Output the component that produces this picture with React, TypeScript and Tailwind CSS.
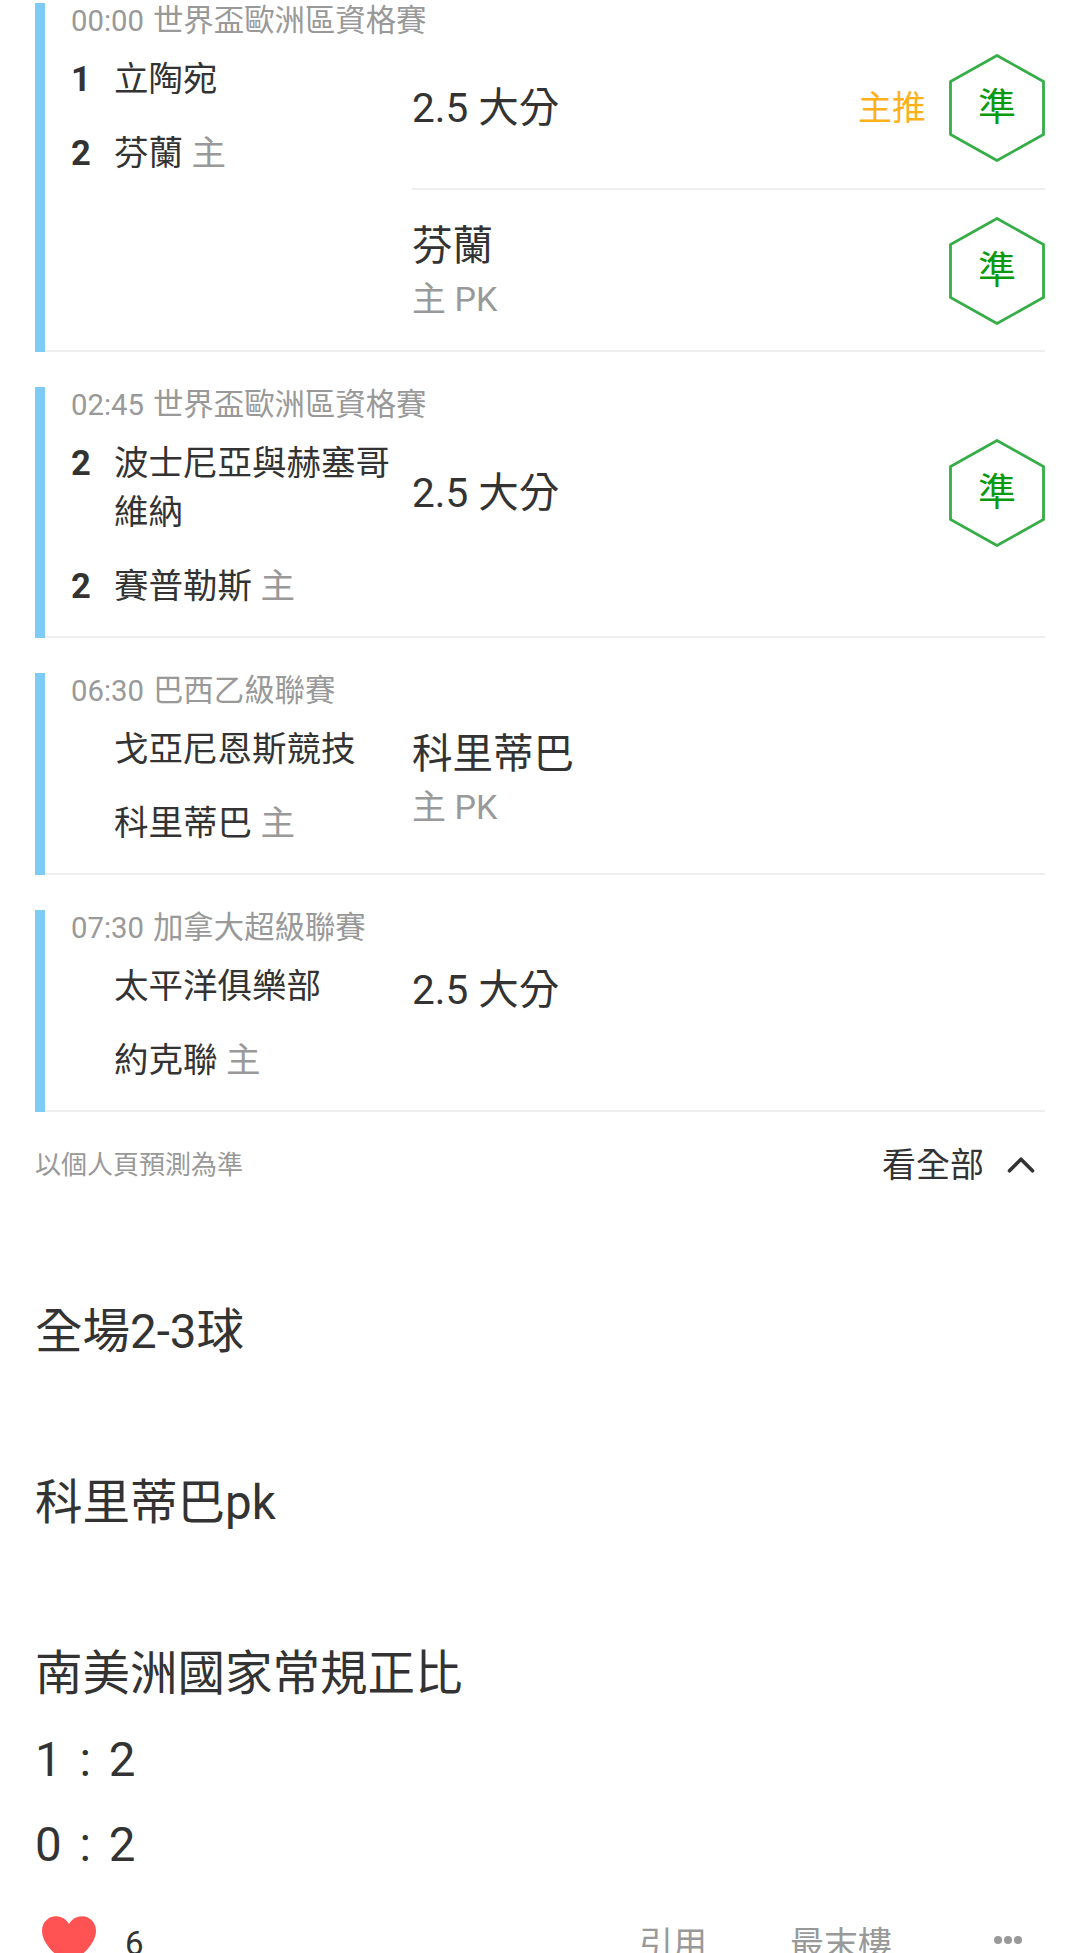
import { ChevronUp } from "lucide-react";

const fontStack = { fontFamily: '"Roboto", "Noto Sans CJK TC", sans-serif' };

type Team = { no?: string; name: string; home?: boolean };
type Pick = { title: string; sub?: string; hot?: boolean; badge?: boolean };
type Match = { time: string; league: string; teams: Team[]; picks: Pick[]; blank?: boolean };

const matches: Match[] = [
    {
        time: "00:00",
        league: "世界盃歐洲區資格賽",
        teams: [{ no: "1", name: "立陶宛" }, { no: "2", name: "芬蘭", home: true }],
        picks: [
            { title: "2.5 大分", hot: true, badge: true },
            { title: "芬蘭", sub: "主 PK", badge: true },
        ],
    },
    {
        time: "02:45",
        league: "世界盃歐洲區資格賽",
        teams: [{ no: "2", name: "波士尼亞與赫塞哥維納" }, { no: "2", name: "賽普勒斯", home: true }],
        picks: [{ title: "2.5 大分", badge: true }],
    },
    {
        time: "06:30",
        league: "巴西乙級聯賽",
        teams: [{ name: "戈亞尼恩斯競技" }, { name: "科里蒂巴", home: true }],
        picks: [{ title: "科里蒂巴", sub: "主 PK" }],
    },
    {
        time: "07:30",
        league: "加拿大超級聯賽",
        teams: [{ name: "太平洋俱樂部" }, { name: "約克聯", home: true }],
        picks: [{ title: "2.5 大分" }],
        blank: true,
    },
];

function HexBadge() {
    return (
        <div className="relative w-[96px] h-[108px] flex items-center justify-center">
            <svg className="absolute inset-0" width="96" height="108" viewBox="0 0 96 108" fill="none">
                <path d="M48 1.5 94.5 27.5V80.5L48 106.5 1.5 80.5V27.5Z" stroke="#36ad47" strokeWidth="2.8" />
            </svg>
            <span className="relative text-[38px] leading-none text-[#0b990f] -mt-[2px]">準</span>
        </div>
    );
}

function PickRow({ pick, index, total, blank }: { pick: Pick; index: number; total: number; blank?: boolean }) {
    const isLast = index === total - 1;
    return (
        <div className={"flex items-center h-[162px] " + (isLast ? "" : "border-b-2 border-[#eeeeee]") + (isLast && total > 1 ? " -mb-[2px]" : "")}>
            <div className={"flex-1 " + (pick.sub ? (total > 1 ? "pt-[4px]" : "pt-[3px]") : blank ? "pt-[1px]" : "")}>
                <div className="text-[40.5px] leading-[53px] text-[#333333]">{pick.title}</div>
                {pick.sub && <div className="text-[34px] leading-[53px] text-[#999999]">{pick.sub}</div>}
                {blank && <div className="h-[53px]" />}
            </div>
            {pick.hot && <span className="text-[34px] text-[#fbb117] mr-[23px]">主推</span>}
            {pick.badge && <HexBadge />}
        </div>
    );
}

function MatchRow({ match }: { match: Match }) {
    return (
        <div className="border-l-[10px] border-[#7fcbf7] w-[1010px] ml-[35px] mb-[35px]">
            <div className="flex border-b-2 border-[#eeeeee]">
                <div className="w-[367px] pl-[26px] pr-[18px] shrink-0">
                    <div className="h-[36px] leading-[36px] text-[#999999] whitespace-nowrap">
                        <span className="text-[29.3px]">{match.time}</span>
                        <span className="text-[30.4px] ml-[9px]">{match.league}</span>
                    </div>
                    <div className="pt-[16px]">
                        {match.teams.map((team, i) => (
                            <div key={i} className="flex pb-[25px] text-[34.5px] leading-[49px] text-[#333333]">
                                <span className="w-[43px] shrink-0 font-bold">{team.no}</span>
                                <span className="flex-1">
                                    {team.name}
                                    {team.home && <span className="text-[#999999]"> 主</span>}
                                </span>
                            </div>
                        ))}
                    </div>
                </div>
                <div className="flex-1 pt-[25px]">
                    {match.picks.map((pick, i) => (
                        <PickRow key={i} pick={pick} index={i} total={match.picks.length} blank={match.blank} />
                    ))}
                </div>
            </div>
        </div>
    );
}

function Score({ left, right }: { left: string; right: string }) {
    return (
        <div>
            {left}
            <span className="inline-block w-[47px] text-center">:</span>
            {right}
        </div>
    );
}

export default function App() {
    return (
        <div className="w-[1080px] h-[1953px] overflow-hidden bg-white pt-[3px]" style={fontStack}>
            {matches.map((m, i) => (
                <MatchRow key={i} match={m} />
            ))}
            <div className="flex items-center justify-between ml-[35px] w-[1010px] -mt-[3px] h-[42px]">
                <span className="text-[26px] text-[#999999]">以個人頁預測為準</span>
                <div className="flex items-center text-[34px] text-[#333333]">
                    看全部
                    <ChevronUp className="ml-[14px] mr-[1px] -my-[10px]" size={46} strokeWidth={1.9} />
                </div>
            </div>
            <div className="ml-[35px] mt-[104px] text-[47.5px] leading-[85.5px] text-[#333333]">
                <div>全場2-3球</div>
                <div className="h-[85.5px]" />
                <div>科里蒂巴pk</div>
                <div className="h-[85.5px]" />
                <div>南美洲國家常規正比</div>
                <Score left="1" right="2" />
                <Score left="0" right="2" />
            </div>
            <div className="flex items-start ml-[42px] w-[1000px] mt-[27px]">
                <svg width="54" height="50" viewBox="0 0 24 22" className="shrink-0">
                    <path
                        d="M12 22C10 20 0 13.5 0 6.5 0 2.8 2.8 0 6.2 0 8.6 0 10.8 1.3 12 3.4 13.2 1.3 15.4 0 17.8 0 21.2 0 24 2.8 24 6.5 24 13.5 14 20 12 22Z"
                        fill="#ff5252"
                    />
                </svg>
                <span className="ml-[29px] mt-[3px] text-[33px] text-[#333333]">6</span>
                <span className="ml-auto mt-[3px] text-[34px] text-[#999999]">引用</span>
                <span className="ml-[83px] mt-[3px] text-[34px] text-[#999999]">最末樓</span>
                <div className="flex gap-[2px] ml-[102px] mt-[20px] mr-[20px]">
                    <span className="w-[8px] h-[8px] rounded-full bg-[#999999]" />
                    <span className="w-[8px] h-[8px] rounded-full bg-[#999999]" />
                    <span className="w-[8px] h-[8px] rounded-full bg-[#999999]" />
                </div>
            </div>
        </div>
    );
}
